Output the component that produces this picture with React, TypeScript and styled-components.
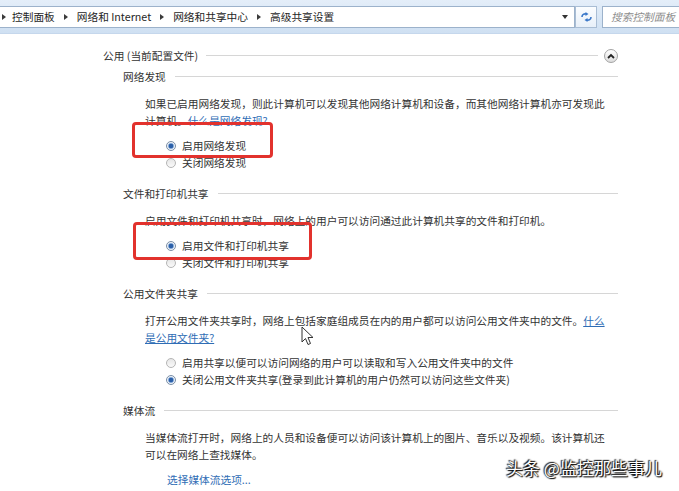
import React from "react";
import styled, { createGlobalStyle } from "styled-components";

const Global = createGlobalStyle`
  html, body { margin: 0; padding: 0; background: #ffffff; }
  body {
    width: 679px; height: 491px; overflow: hidden;
    font-family: "Noto Sans CJK SC", "Noto Sans", sans-serif;
    color: #333;
  }
`;

const Page = styled.div`
  position: relative;
  width: 679px;
  height: 491px;
  overflow: hidden;
  background: #fff;
`;

const TopBar = styled.div`
  height: 34px;
  display: flex;
  align-items: center;
  gap: 5px;
  background: linear-gradient(#e4eef9, #d6e5f5 60%, #cfe0f2);
  border-bottom: 1px solid #c5d7ec;
  box-sizing: border-box;
`;

const AddressBox = styled.div`
  flex: 0 0 578px;
  height: 22px;
  margin-left: -3px;
  box-sizing: border-box;
  border: 1px solid #9cb2cb;
  background: #fff;
  display: flex;
  align-items: center;
  padding-left: 3px;
  font-size: 10.7px;
  color: #1e1e1e;
`;

const Crumb = styled.span`
  white-space: nowrap;
`;

const Sep = styled.span`
  display: inline-block;
  width: 0;
  height: 0;
  border-top: 3px solid transparent;
  border-bottom: 3px solid transparent;
  border-left: 4px solid #3b3b3b;
  margin: 0 9px 0 9px;
  &:first-child { margin: 0 6px 0 1px; }
`;

const DropArrow = styled.span`
  margin-left: auto;
  margin-right: 6px;
  width: 0;
  height: 0;
  border-left: 3.5px solid transparent;
  border-right: 3.5px solid transparent;
  border-top: 4px solid #333;
`;

const RefreshBtn = styled.div`
  flex: 0 0 22px;
  height: 22px;
  margin-left: -5px;
  box-sizing: border-box;
  border: 1px solid #a9bdd4;
  background: linear-gradient(#fbfdff, #e8f0f9);
  display: flex;
  align-items: center;
  justify-content: center;
`;

const SearchBox = styled.div`
  flex: 1;
  height: 22px;
  box-sizing: border-box;
  border: 1px solid #9cb2cb;
  border-right: none;
  background: #fff;
  display: flex;
  align-items: center;
  padding-left: 8px;
  font-size: 10.7px;
  font-style: italic;
  color: #8d8d8d;
  white-space: nowrap;
  overflow: hidden;
`;

const Content = styled.div`
  margin: 13px 0 0 103px;
  width: 515px;
  font-size: 10.7px;
  line-height: 17px;
`;

const TitleRow = styled.div`
  display: flex;
  align-items: center;
  height: 17px;
  margin-bottom: 4px;
  color: #333;
`;

const SubRow = styled.div`
  display: flex;
  align-items: center;
  height: 17px;
  margin-left: 20px;
  margin-bottom: 10px;
  color: #333;
`;

const Rule = styled.div<{ $gap: number }>`
  flex: 1;
  height: 1px;
  margin-left: ${(p) => p.$gap}px;
  background: #d6d6d6;
`;

const Collapse = styled.div`
  width: 14px;
  height: 14px;
  margin-left: 6px;
  border-radius: 50%;
  box-sizing: border-box;
  border: 1px solid #a3a3a3;
  background: linear-gradient(#ffffff, #dcdcdc);
  display: flex;
  align-items: center;
  justify-content: center;
`;

const Para = styled.p`
  margin: 0 0 8px 42px;
  max-width: 466px;
  color: #333;
`;

const Link = styled.a<{ $underline?: boolean }>`
  color: #2f6db5;
  text-decoration: ${(p) => (p.$underline ? "underline" : "none")};
`;

const RadioGroup = styled.div`
  position: relative;
  margin: 0 0 14px 63px;
`;

const RadioRow = styled.div`
  display: flex;
  align-items: center;
  height: 17px;
  gap: 6px;
  color: #333;
`;

const RadioDot = styled.span<{ $on?: boolean }>`
  flex: 0 0 10px;
  width: 10px;
  height: 10px;
  box-sizing: border-box;
  border-radius: 50%;
  border: 1px solid ${(p) => (p.$on ? "#7a8ea6" : "#b5b5b5")};
  background: ${(p) =>
    p.$on
      ? "radial-gradient(circle, #2b5fa8 0 2px, #7fa6d8 2.5px, #eef2f7 3.5px)"
      : "linear-gradient(#e6e6e6, #fafafa)"};
`;

const Highlight = styled.div<{ $l: number; $t: number; $w: number; $h: number }>`
  position: absolute;
  left: ${(p) => p.$l}px;
  top: ${(p) => p.$t}px;
  width: ${(p) => p.$w}px;
  height: ${(p) => p.$h}px;
  box-sizing: border-box;
  border: 3px solid #e2322d;
  border-radius: 4px;
  pointer-events: none;
`;

const LinkRow = styled.div`
  margin-left: 64px;
  height: 17px;
`;

const Watermark = styled.div`
  position: absolute;
  left: 506px;
  top: 457px;
  font-size: 17px;
  line-height: 22px;
  color: #fff;
  text-shadow: 0 0 2px #000, 1px 1px 1px #000, -1px -1px 1px #222;
  white-space: nowrap;
`;

const Cursor = styled.svg`
  position: absolute;
  left: 301px;
  top: 326px;
`;

const Radio = ({ on, children }: { on?: boolean; children: React.ReactNode }) => (
  <RadioRow>
    <RadioDot $on={on} />
    <span>{children}</span>
  </RadioRow>
);

export default function App() {
  return (
    <Page>
      <Global />
      <TopBar>
        <AddressBox>
          <Sep />
          <Crumb>控制面板</Crumb>
          <Sep />
          <Crumb>网络和 Internet</Crumb>
          <Sep />
          <Crumb>网络和共享中心</Crumb>
          <Sep />
          <Crumb>高级共享设置</Crumb>
          <DropArrow />
        </AddressBox>
        <RefreshBtn>
          <svg width="13" height="12" viewBox="0 0 13 12">
            <path d="M2 6 C2 3.5 4 2.5 6.5 3" stroke="#3b78c9" strokeWidth="1.6" fill="none" />
            <path d="M5.5 1 L8.5 3 L5.5 5 Z" fill="#3b78c9" />
            <path d="M11 6 C11 8.5 9 9.5 6.5 9" stroke="#3b78c9" strokeWidth="1.6" fill="none" />
            <path d="M7.5 11 L4.5 9 L7.5 7 Z" fill="#3b78c9" />
          </svg>
        </RefreshBtn>
        <SearchBox>搜索控制面板</SearchBox>
      </TopBar>

      <Content>
        <TitleRow>
          <span>公用 (当前配置文件)</span>
          <Rule $gap={8} />
          <Collapse>
            <svg width="8" height="6" viewBox="0 0 8 6">
              <path d="M1 5 L4 2 L7 5" stroke="#222" strokeWidth="1.8" fill="none" />
            </svg>
          </Collapse>
        </TitleRow>

        <SubRow>
          <span>网络发现</span>
          <Rule $gap={9} />
        </SubRow>
        <Para>
          如果已启用网络发现，则此计算机可以发现其他网络计算机和设备，而其他网络计算机亦可发现此计算机。
          <Link>什么是网络发现?</Link>
        </Para>
        <RadioGroup>
          <Radio on>启用网络发现</Radio>
          <Radio>关闭网络发现</Radio>
          <Highlight $l={-34} $t={-15} $w={141} $h={36} />
        </RadioGroup>

        <SubRow>
          <span>文件和打印机共享</span>
          <Rule $gap={9} />
        </SubRow>
        <Para>启用文件和打印机共享时，网络上的用户可以访问通过此计算机共享的文件和打印机。</Para>
        <RadioGroup>
          <Radio on>启用文件和打印机共享</Radio>
          <Radio>关闭文件和打印机共享</Radio>
          <Highlight $l={-33} $t={-15} $w={179} $h={38} />
        </RadioGroup>

        <SubRow>
          <span>公用文件夹共享</span>
          <Rule $gap={9} />
        </SubRow>
        <Para>
          打开公用文件夹共享时，网络上包括家庭组成员在内的用户都可以访问公用文件夹中的文件。
          <Link $underline>什么是公用文件夹?</Link>
        </Para>
        <RadioGroup>
          <Radio>启用共享以便可以访问网络的用户可以读取和写入公用文件夹中的文件</Radio>
          <Radio on>关闭公用文件夹共享(登录到此计算机的用户仍然可以访问这些文件夹)</Radio>
        </RadioGroup>

        <SubRow>
          <span>媒体流</span>
          <Rule $gap={9} />
        </SubRow>
        <Para>
          当媒体流打开时，网络上的人员和设备便可以访问该计算机上的图片、音乐以及视频。该计算机还可以在网络上查找媒体。
        </Para>
        <LinkRow>
          <Link>选择媒体流选项...</Link>
        </LinkRow>
      </Content>

      <Cursor width="14" height="20" viewBox="0 0 14 20">
        <path d="M1 1 L1 16 L4.5 12.5 L7 18.5 L9.5 17.5 L7 11.5 L12 11.5 Z" fill="#fff" stroke="#333" strokeWidth="1" />
      </Cursor>

      <Watermark>头条 @监控那些事儿</Watermark>
    </Page>
  );
}
